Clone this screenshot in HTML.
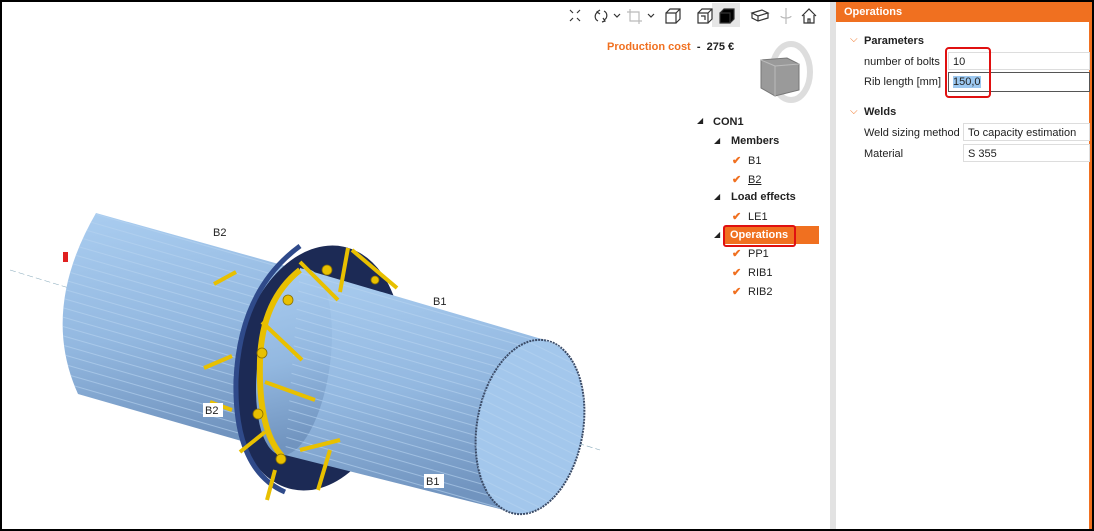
<!DOCTYPE html>
<html><head><meta charset="utf-8"><style>
*{margin:0;padding:0;box-sizing:border-box}
body{width:1094px;height:531px;overflow:hidden;background:#fff;font-family:"Liberation Sans",sans-serif;position:relative;font-size:11px;color:#222}
.frame{position:absolute;left:0;top:0;width:1094px;height:531px;border:2px solid #000;pointer-events:none;z-index:10}
.abs{position:absolute}
.tree div{position:absolute;font-size:11px;white-space:nowrap}
.chk{color:#f07020;font-weight:bold;font-size:12px}
</style></head><body>
<div class="frame"></div>
<div class="abs" style="left:712px;top:3px;width:28px;height:24px;background:#e6e6e6"></div>
<svg class="abs" style="left:560px;top:4px" width="270" height="24" viewBox="0 0 270 24" fill="none" stroke="#333" stroke-width="1.2">
<path d="M10 6l3 3M20 6l-3 3M10 17l3-3M20 17l-3-3"/>
<path d="M38 8a5 5 0 0 0 0 9M40 6l-3 2 3 2M44 16a5 5 0 0 0 0-9M42 18l3-1-2-3"/>
<path d="M54 10l3 3 3-3"/>
<path d="M70 5v12h12M67 8h12v12" stroke="#bbb"/>
<path d="M88 10l3 3 3-3"/>
<path d="M106 9h10v10h-10zM106 9l4-4h10v10l-4 4M116 9l4-4"/>
<path d="M138 9h10v10h-10zM138 9l4-4h10v10l-4 4M148 9l4-4M141 12h4v4"/>
<path d="M160 9h10v10h-10z M160 9l4-4h10v10l-4 4" fill="#000"/>
<path d="M192 9l10-3 6 3-10 3zM192 9v5l6 3 10-3v-5M198 12v5"/>
<path d="M226 4v16M221 12a5 2 0 0 0 10 0" stroke="#bbb"/>
<path d="M242 12l7-7 7 7M244 11v8h10v-8M248 19v-4h2v4"/>
</svg>
<div class="abs" style="left:607px;top:41px;font-size:11px;font-weight:bold"><span style="color:#f07020">Production cost</span> &nbsp;-&nbsp; 275 €</div>
<svg class="abs" style="left:755px;top:36px" width="60" height="70" viewBox="0 0 60 70">
<ellipse cx="36" cy="36" rx="19" ry="28" stroke="#ddd" stroke-width="6" fill="none"/>
<path d="M6 24l26-2 12 6v26l-24 6-14-8z" fill="#9a9a9a" stroke="#777"/>
<path d="M6 24l14 6v30M20 30l24-2" stroke="#bbb" fill="none"/>
</svg>
<div class="tree" style="color:#222">
<div style="left:697px;top:116px;font-size:8px">◢</div><div style="left:713px;top:116px;font-weight:bold">CON1</div>
<div style="left:714px;top:136px;font-size:8px">◢</div><div style="left:731px;top:135px;font-weight:bold">Members</div>
<div style="left:732px;top:154px" class="chk">✔</div><div style="left:748px;top:155px">B1</div>
<div style="left:732px;top:173px" class="chk">✔</div><div style="left:748px;top:174px;text-decoration:underline">B2</div>
<div style="left:714px;top:192px;font-size:8px">◢</div><div style="left:731px;top:191px;font-weight:bold">Load effects</div>
<div style="left:732px;top:210px" class="chk">✔</div><div style="left:748px;top:211px">LE1</div>
<div style="left:714px;top:230px;font-size:8px">◢</div>
<div style="left:725px;top:226px;width:94px;height:18px;background:#f07020"></div>
<div style="left:723px;top:225px;width:73px;height:22px;border:2px solid #e01010;border-radius:3px"></div>
<div style="left:730px;top:229px;font-weight:bold;color:#fff">Operations</div>
<div style="left:732px;top:247px" class="chk">✔</div><div style="left:748px;top:248px">PP1</div>
<div style="left:732px;top:266px" class="chk">✔</div><div style="left:748px;top:267px">RIB1</div>
<div style="left:732px;top:285px" class="chk">✔</div><div style="left:748px;top:286px">RIB2</div>
</div>
<svg class="abs" style="left:0;top:0" width="830" height="531" viewBox="0 0 830 531">
<defs>
<linearGradient id="g" x1="0" y1="0" x2="0.15" y2="1"><stop offset="0" stop-color="#aacdf0"/><stop offset="0.55" stop-color="#93b8e0"/><stop offset="1" stop-color="#7194bf"/></linearGradient>
<pattern id="st" width="8" height="9" patternUnits="userSpaceOnUse" patternTransform="rotate(16)"><line x1="0" y1="8.5" x2="8" y2="8.5" stroke="#b8d4f0" stroke-width="0.6"/></pattern>
</defs>
<line x1="10" y1="270" x2="600" y2="450" stroke="#8ab" stroke-width="0.6" stroke-dasharray="6 3"/>
<path d="M96 213 L300 270 L280 452 L78 394 Q40 310 96 213Z" fill="url(#g)"/>
<path d="M96 213 L300 270 L280 452 L78 394 Q40 310 96 213Z" fill="url(#st)"/>
<rect x="63" y="252" width="5" height="10" fill="#e02020"/>
<ellipse cx="318" cy="368" rx="82" ry="124" transform="rotate(12 318 368)" fill="#1c2a55"/>
<path d="M300 246 Q240 290 236 380 Q234 470 285 492" stroke="#2f4a8a" stroke-width="5" fill="none"/>
<g stroke="#e8c000" stroke-width="4" fill="none">
<path d="M236 272l-22 12M232 356l-28 12M232 410l-22 -8"/>
</g>
<path d="M300 268 L545 340 L512 512 L285 455 Z" fill="url(#g)"/>
<ellipse cx="294" cy="362" rx="36" ry="94" transform="rotate(8 294 362)" fill="url(#g)"/>
<path d="M300 268 L545 340 L512 512 L285 455 Z" fill="url(#st)"/>
<ellipse cx="530" cy="427" rx="53" ry="88" transform="rotate(10 530 427)" fill="#a3c7ec" stroke="#3a4a66" stroke-width="2" stroke-dasharray="2 1"/>
<ellipse cx="530" cy="427" rx="53" ry="88" transform="rotate(10 530 427)" fill="url(#st)"/>
<path d="M300 270 Q262 300 260 360 Q258 430 282 456" stroke="#e8c000" stroke-width="6" fill="none"/>
<g stroke="#e8c000" stroke-width="4" fill="none">
<path d="M300 262l38 38M348 248l-8 44M352 250l45 38M262 322l40 38M265 382l50 18M300 450l40 -10M330 450l-12 40M275 470l-8 30M240 452l25 -20"/>
</g>
<g fill="#e8c000" stroke="#8a7000" stroke-width="0.8">
<circle cx="327" cy="270" r="5"/><circle cx="288" cy="300" r="5"/><circle cx="262" cy="353" r="5"/><circle cx="258" cy="414" r="5"/><circle cx="281" cy="459" r="5"/><circle cx="375" cy="280" r="4"/>
</g>
<g font-family="Liberation Sans" font-size="11" fill="#222">
<text x="213" y="236">B2</text>
<text x="433" y="305">B1</text>
<rect x="203" y="403" width="20" height="14" fill="#fff"/><text x="205" y="414">B2</text>
<rect x="424" y="474" width="20" height="14" fill="#fff"/><text x="426" y="485">B1</text>
</g>
</svg>
<div class="abs" style="left:830px;top:0;width:6px;height:531px;background:#e2e2e2"></div>
<div class="abs" style="left:836px;top:2px;width:254px;height:20px;background:#f07020;color:#fff;font-weight:bold;font-size:11px;padding:4px 8px">Operations</div>
<div class="abs" style="left:1089px;top:2px;width:3px;height:527px;background:#f07020"></div>
<div class="abs" style="left:850px;top:34px;color:#f07020;font-size:10px">⌵</div>
<div class="abs" style="left:864px;top:35px;font-weight:bold">Parameters</div>
<div class="abs" style="left:864px;top:56px">number of bolts</div>
<div class="abs" style="left:948px;top:52px;width:142px;height:18px;border:1px solid #ddd;padding:3px 4px">10</div>
<div class="abs" style="left:864px;top:76px">Rib length [mm]</div>
<div class="abs" style="left:948px;top:72px;width:142px;height:20px;border:1px solid #555;padding:3px 4px"><span style="background:#9cc8f0">150,0</span></div>
<div class="abs" style="left:945px;top:47px;width:46px;height:51px;border:2px solid #e01010;border-radius:4px"></div>
<div class="abs" style="left:850px;top:106px;color:#f07020;font-size:10px">⌵</div>
<div class="abs" style="left:864px;top:106px;font-weight:bold">Welds</div>
<div class="abs" style="left:864px;top:127px">Weld sizing method</div>
<div class="abs" style="left:963px;top:123px;width:127px;height:18px;border:1px solid #ddd;padding:3px 4px">To capacity estimation</div>
<div class="abs" style="left:864px;top:148px">Material</div>
<div class="abs" style="left:963px;top:144px;width:127px;height:18px;border:1px solid #ddd;padding:3px 4px">S 355</div>
</body></html>
